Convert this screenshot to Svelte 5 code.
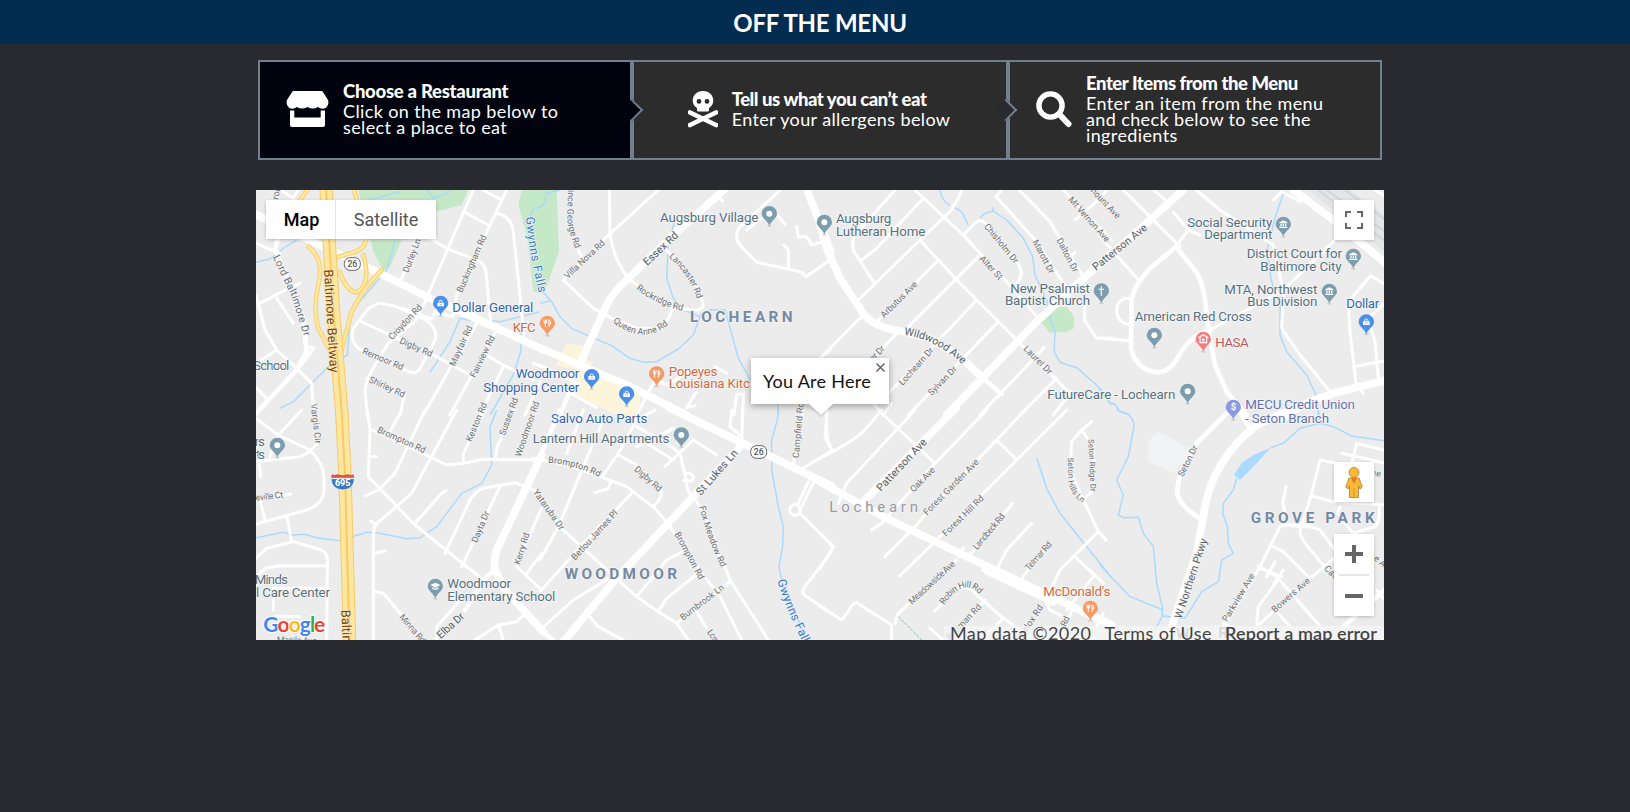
<script>
  // Map geometry is stored per tile; each tile uses units of a third of a pixel.
  const tiles = [
    {
      x: -6, y: -5,
      parks: ['M325 15H655L635 60L555 80L520 160L455 165L420 245L400 258L370 200Z', 'M815 15H875V325L850 320L840 230L830 150L805 60Z'],
      water: ['M18 232L60 222L100 190L140 165', 'M350 48L450 20', 'M440 150L410 255L320 360L300 400L292 510L230 550L130 650L90 670', 'M540 562L600 470L630 400L655 405L700 405L750 410L870 380', 'M530 15L550 38L585 28L600 15', 'M815 420L812 500L790 570L720 690', 'M875 65L848 75L838 100'],
      thin: ['M18 175L65 195L90 205', 'M70 0L130 40L145 10', 'M30 355L105 315L150 295', 'M18 330L45 435L80 495L140 550L185 595L192 690', 'M80 340L130 415', 'M18 608L50 640', 'M80 495L18 535', 'M165 485L192 490L150 545', 'M670 15L525 350L495 410L415 475L375 540Q345 590 345 620L352 690', 'M770 15L620 330L610 395L560 385', 'M640 80L715 120', 'M690 10L755 45', 'M740 85Q782 92 790 140L822 450', 'M480 125L590 190L690 230Q708 240 710 280L722 410', 'M505 150L455 280', 'M310 430L355 370L385 355L430 362L530 405Q565 435 555 465L510 550Q500 568 475 560L325 490Q298 465 310 430', 'M330 408L420 450L560 515L660 570', 'M350 580L462 635L450 690', 'M460 370L545 402L570 355', 'M690 400L600 550L520 690', 'M740 435L600 690', 'M700 505L760 540L850 585', 'M760 545L690 690', 'M850 535L875 545', 'M870 590L825 690'],
      mid: ['M92 120L75 195L100 250L160 400L170 500L140 555L18 685'],
      main: ['M10 85L250 200L400 270L540 340L700 410L880 495'],
      ramps: ['M175 10L150 45', 'M310 10L325 60L350 150Q350 195 300 205L265 215', 'M175 185Q225 225 205 300Q188 370 205 430L258 530', 'M268 260Q290 320 320 322Q365 300 340 210', 'M395 255Q340 310 305 380L268 520'],
      highway: 'M228 10L237 160L252 400L276 690',
      labels: [['Durley Ln', 475, 265, 513, 165], ['Buckingham Rd', 636, 325, 710, 155], ['Croydon Rd', 427, 466, 518, 368], ['Digby Rd', 447, 474, 543, 516], ['Remoor Rd', 335, 505, 456, 556], ['Shirley Rd', 355, 590, 460, 638], ['Mayfair Rd', 614, 545, 668, 427], ['Fairview Rd', 675, 580, 736, 457], ['ror', 83, 45, 92, 12],
        ['Baltimore Beltway', 222, 254, 240, 563, 'brown'], ['Dollar General', 607, 380, 850, 380, 'poi blue'], ['KFC', 788, 440, 857, 440, 'poi orange'], ['School', 10, 555, 118, 555, 'poi'], ['Woodmoor', 797, 580, 988, 580, 'poi blue'], ['Shopping Center', 700, 620, 988, 620, 'poi blue']],
      curved: [['Lord Baltimore Dr', 'M68 216L125 335L168 475', 'big', 257], ['Gwynns Falls', 'M828 96Q834 190 872 348', 'river', 232]],
      pins: [[572, 355, '#4a90e8', 'shop']], shields: [[307, 237]]
    },
    {
      x: 284, y: -5,
      parks: ['M0 15H50L57 200L22 300L0 322Z'],
      sand: ['M65 505L82 475L135 482L132 520L158 530L150 548L100 552L45 542Z', 'M95 560L155 550L300 620L300 690H230L85 620Z'],
      water: ['M60 15L18 25L15 55L0 68', 'M0 310L35 350L60 395L95 430L150 455L215 482L270 520L310 532L350 530L415 492L460 450L480 395L430 375L400 340L380 280L385 180L402 115', 'M480 390L510 375L555 375L565 410L595 520L640 600', 'M0 355L30 348', 'M712 650L716 690'],
      thin: ['M208 10L210 150Q220 220 265 280', 'M265 280L330 330L400 370L470 376Q495 372 488 350L475 310L380 195', 'M355 15L195 160L70 285L160 370L210 398L290 430L370 430L400 370', 'M115 195L125 215', 'M530 30L548 48', 'M725 12L600 125Q580 150 600 180L650 232L745 252L785 262L798 275L870 225', 'M732 180L745 195V250', 'M770 125L775 155L800 155L815 180L850 170', 'M620 135L665 100', 'M735 118L700 75', 'M80 618L170 668', 'M0 540L120 600', 'M345 585L290 690', 'M340 585L385 600L420 575L480 552', 'M470 620L440 668L465 662', 'M525 545L560 565', 'M582 690L590 628H610L608 690', 'M870 495L840 520'],
      mid: ['M115 560L60 690'],
      main: ['M555 12L400 150L265 280Q215 325 200 360L118 540', 'M800 12L872 200', 'M0 488L118 540L260 600L440 690'],
      labels: [['Villa Nova Rd', 83, 283, 196, 176], ['Essex Rd', 322, 243, 417, 153, 'dark'], ['Augsburg Village', 360, 110, 655, 110, 'poi'], ['LOCHEARN', 450, 410, 758, 410, 'area'], ['Popeyes', 386, 573, 532, 573, 'poi orange'], ['Louisiana Kitc', 386, 610, 630, 610, 'poi orange']],
      curved: [['ince George Rd', 'M84 15L82 100Q84 140 110 200', '', 180], ['Lancaster Rd', 'M386 216Q450 270 472 345', '', 154], ['Rockridge Rd', 'M288 312Q350 360 432 378', '', 155], ['Queen Anne Rd', 'M218 410Q310 485 390 415', '', 184]],
      pins: [[22, 415, '#f79b66', 'food'], [155, 575, '#4a90e8', 'shop'], [260, 627, '#4a90e8', 'shop'], [350, 567, '#f79b66', 'food'], [688, 86, '#7b9dae', 'dot'], [853, 112, '#7b9dae', 'dot']]
    },
    {
      x: 564, y: -5,
      parks: ['M690 370L740 365L762 395V430L740 440L690 443L662 410Z'],
      water: ['M360 15Q365 50 390 60', 'M405 68L425 80L445 120', 'M480 100L495 85L520 78L560 105L610 160L638 215L645 270L680 345L690 400L705 440L702 500L720 532L770 548L830 600L875 660', 'M520 80L517 66'],
      thin: ['M225 15L105 150Q92 180 102 200L160 290', 'M285 15L370 95L430 150L480 205L560 290L655 400', 'M310 40L170 190L125 225', 'M425 15L415 40L390 80L300 165L115 345', 'M300 165L410 285L590 465L750 625', 'M355 225L165 415', 'M475 215L260 430', 'M430 150L470 110Q490 100 505 125L590 230Q610 255 600 280L590 300', 'M470 345L200 630', 'M535 410L265 690', 'M125 395L0 520', 'M230 445L160 520', 'M545 15L528 35L650 170L740 310', 'M598 15L690 110L795 285', 'M730 15L875 165', 'M765 105L830 50L875 0', 'M672 488L480 690', 'M710 580L600 690', 'M755 620L700 690', 'M795 355L793 405L830 460H875', 'M750 215L765 203', 'M160 655L190 690L215 655'],
      mid: ['M490 580L545 628'],
      main: ['M0 120L20 190L60 280L120 370Q145 425 250 440L330 460L420 515L490 580', 'M870 208L780 290L650 410L380 690'],
      labels: [['Augsburg', 48, 115, 214, 115, 'poi'], ['Lutheran Home', 48, 154, 316, 154, 'poi'], ['Arbutus Ave', 192, 400, 294, 300], ['Lochearn Dr', 248, 603, 342, 497], ['Sylvan Dr', 335, 633, 412, 554], ['er Dr', 160, 530, 196, 492], ['Chisholm Dr', 491, 125, 583, 237], ['Alter St', 477, 222, 537, 286], ['Marott Dr', 637, 170, 688, 268], ['Dalton Dr', 709, 165, 760, 264], ['Mt Vernon Ave', 744, 45, 858, 173], ['mount Ave', 805, 12, 890, 103], ['Patterson Ave', 828, 258, 984, 132, 'dark'], ['New Psalmist', 571, 323, 810, 323, 'poi'], ['Baptist Church', 555, 361, 810, 361, 'poi'], ['Laurel Dr', 609, 493, 686, 570], ['FutureCare - Lochearn', 682, 643, 1066, 643, 'poi']],
      curved: [['Wildwood Ave', 'M252 450Q345 460 432 542', 'dark', 200]],
      pins: [[844, 318, '#7b9dae', 'cross']]
    },
    {
      x: 844, y: -5,
      rail: 'M625 15H750L875 105V215L840 190Z',
      water: ['M550 25L525 100L500 200L515 290L540 360L540 450L560 500L620 570L648 630L655 690', 'M0 610L30 655L45 658L60 680L90 690'],
      thin: ['M70 15L240 185', 'M155 10L205 52', 'M0 155L120 290', 'M95 340Q50 335 50 380Q55 415 90 418', 'M0 460L90 467', 'M220 82L265 135L300 150', 'M265 135L235 175', 'M285 12L360 75L520 180L535 250L550 320L545 430L600 510L690 620', 'M330 435L440 375L545 320L700 170', 'M875 310L812 272L745 350L750 440L768 595L790 625', 'M760 545L870 525', 'M870 340L805 400L825 470L835 580', 'M820 12L875 45', 'M520 45L545 20L600 50L620 35'],
      mid: ['M235 180L150 250Q95 310 95 350L93 490Q110 560 180 562Q215 555 235 515Q270 450 330 435', 'M228 185L280 250Q315 290 320 400L345 540L380 620L440 690'],
      main: ['M250 15L0 240', 'M580 15L700 105L875 250', 'M870 583L700 625L630 650L540 700'],
      labels: [['Social Security', 262, 125, 517, 125, 'poi'], ['Department', 313, 163, 517, 163, 'poi'], ['District Court for', 440, 218, 726, 218, 'poi'], ['Baltimore City', 481, 257, 725, 257, 'poi'], ['MTA, Northwest', 373, 326, 652, 326, 'poi'], ['Bus Division', 442, 364, 652, 364, 'poi'], ['Dollar', 739, 370, 838, 370, 'poi blue'], ['American Red Cross', 104, 409, 456, 409, 'poi'], ['HASA', 346, 487, 446, 487, 'poi red'], ['MECU Credit Union', 436, 673, 765, 673, 'poi purple']],
      curved: [],
      pins: [[550, 118, '#7b9dae', 'gov'], [760, 214, '#7b9dae', 'gov'], [688, 319, '#7b9dae', 'gov'], [799, 411, '#4a90e8', 'shop'], [163, 451, '#7b9dae', 'dot'], [310, 463, '#f47c81', 'plus'], [263, 619, '#7b9dae', 'dot'], [400, 667, '#8c9ae0', 'dollar']]
    },
    {
      x: -6, y: 220,
      water: ['M18 383L100 367L130 375L165 373L200 383L270 392L350 367L390 370L470 386L510 383L560 350L635 250L695 220L725 165L720 50L740 0'],
      thin: ['M18 25L85 75L180 120Q220 160 222 200L222 245Q215 285 170 300L110 317L18 342', 'M155 0L85 75', 'M18 155L150 140Q180 130 205 95', 'M28 160L32 200', 'M85 75L60 140', 'M30 270L45 330', 'M80 262L122 252', 'M110 317L125 395', 'M18 445L50 415L130 395L215 420Q235 430 232 460L230 690', 'M18 500L45 475L90 467H230', 'M70 540V600', 'M150 620L75 618', 'M70 535H230', 'M352 0L360 60L355 200L495 345L700 510', 'M360 57L455 100L590 165L640 160L700 148L870 150', 'M360 140H380', 'M455 0L420 65', 'M525 0L435 190L385 240L345 258', 'M620 0L485 250L375 345Q370 360 370 400V690', 'M375 430L405 423', 'M362 333L380 345', 'M588 242L575 250L495 340', 'M375 545L400 550L450 610L520 690', 'M585 430L660 270Q680 240 700 235L795 218L870 248', 'M750 230L635 470', 'M800 470L875 540', 'M875 295L800 460', 'M875 430L830 490', 'M675 690L745 645L800 635L830 605', 'M745 645L760 690', 'M640 155V130L705 0', 'M735 145L742 110L790 0', 'M640 560L560 650V690'],
      mid: ['M645 600L710 500L735 478'],
      main: ['M875 135L740 420Q730 450 735 480L765 540L880 665'],
      highway: 'M275 0L285 200L299 700',
      labels: [['Brompton Rd', 380, 66, 522, 130], ['Keston Rd', 664, 97, 712, -18], ['Sussex Rd', 764, 78, 805, -32], ['Woodmoor Rd', 812, 142, 868, -22], ['Vargis Cir', 182, -18, 196, 102], ['eville Ct', 18, 272, 100, 263], ['Dayta Dr', 681, 400, 719, 308], ['Kerry Rd', 809, 466, 839, 372], ['Minna Rd', 447, 622, 515, 702], ['Elba Dr', 572, 688, 645, 622, 'dark'], ['Manila Ave', 80, 698, 200, 702], ['ns', 14, 108, 45, 108, 'poi'], ['ts', 18, 147, 45, 147, 'poi'], ['Lantern Hill Apartments', 848, 98, 1258, 98, 'poi'], ['Woodmoor', 592, 535, 783, 535, 'poi'], ['Elementary School', 592, 574, 916, 574, 'poi'], ['Minds', 14, 522, 114, 522, 'poi'], ['l Care Center', 18, 562, 240, 562, 'poi'], ['Baltimore', 274, 600, 281, 765, 'brown']],
      curved: [],
      pins: [[82, 106, '#7b9dae', 'dot'], [556, 529, '#7b9dae', 'grad']]
    },
    {
      x: 284, y: 220,
      sand: ['M200 0H300L280 20L240 8Z'],
      water: ['M715 0L712 30L695 90L695 180L715 290L730 350L728 410L717 470L725 510L800 690'],
      thin: ['M-20 145L30 155L110 175L180 200L260 230L345 295L390 350L410 380L440 430L540 560L605 690', 'M235 135L290 165L365 245Q365 265 340 290', 'M190 195L235 130L290 30L345 0', 'M190 30L130 170L55 350L0 450', 'M275 250L130 400L0 545', 'M165 248L205 235L212 215', 'M-15 240L70 360L190 470L290 560L355 605L410 640L445 690', 'M410 640L480 590L570 515', 'M290 560L380 450L430 425', 'M355 605L380 565L480 485', 'M145 615L175 650L250 690', 'M215 500L100 570L0 660', 'M465 265L500 330L570 510L685 690', 'M470 605L500 655', 'M455 260Q440 240 440 215L420 130L380 100L290 50', 'M430 212Q460 220 460 200Q450 185 438 190', 'M290 110L400 55', 'M375 170L460 90L530 135', 'M320 100L400 150', 'M130 0L80 130', 'M575 0L570 50L600 75', 'M608 0L605 95', 'M870 125L780 180', 'M760 160L780 60L790 0', 'M808 210L772 285', 'M820 218L785 290', 'M785 315L875 405', 'M875 425L795 530Q780 550 800 560L875 610', 'M858 0L862 90L872 110', 'M765 284A16 16 0 1 0 765 316A16 16 0 1 0 765 284'],
      mid: ['M60 0L0 140', 'M-10 650L40 690'],
      main: ['M390 -5L600 95L875 228', 'M605 105L460 260L225 510L70 695'],
      labels: [['Salvo Auto Parts', 33, 40, 322, 40, 'poi blue'], ['Digby Rd', 281, 180, 356, 246], ['Yataruba Dr', -22, 246, 60, 362], ['Betlou James Pl', 106, 452, 235, 310], ['St Lukes Ln', 482, 258, 595, 130, 'dark'], ['Campfield Rd', 776, 145, 791, -22], ['Brompton Rd', 403, 372, 478, 510], ['Burnbrook Ln', 429, 632, 554, 536], ['WOODMOOR', 74, 508, 411, 508, 'area'], ['Los', 500, 667, 523, 698]],
      curved: [['Brompton Rd', 'M24 158Q110 165 178 202', '', 160], ['Fox Meadow Rd', 'M478 290Q500 380 542 470', '', 194], ['Gwynns Falls', 'M712 512Q738 600 800 720', 'river', 222]],
      pins: [[424, 75, '#7b9dae', 'dot']], shields: [[656, 126]]
    },
    {
      x: 564, y: 220,
      water: ['M650 143L680 235L720 310L800 410L875 503'],
      thin: ['M285 0L80 220L55 280', 'M175 0L345 160', 'M185 0L130 65Q90 100 0 145', 'M22 0L15 80L35 120', 'M500 0L345 160L185 340L155 360', 'M615 0L530 90L310 320L285 350L195 440', 'M740 0L480 260L350 390L240 497', 'M530 90L590 150', 'M578 280L450 435', 'M635 340L560 420L535 470', 'M680 410L605 505', 'M410 450L235 610L225 640', 'M0 370L40 410L0 475', 'M-5 585L65 630L85 605Q95 580 110 578L215 645V690', 'M345 603L400 545Q430 520 460 545L550 625L640 690', 'M495 570L390 690', 'M550 625L480 690', 'M430 413L415 440', 'M815 35L785 60L755 95L750 180L790 270L835 365L858 390', 'M785 60L820 110V240L790 270', 'M835 365L720 480L685 555', 'M765 440L850 520', 'M820 500L740 600', 'M330 655L370 690', 'M675 570L690 600L740 625', 'M760 590L720 690', 'M830 650L850 610'],
      mid: ['M490 480L600 530'],
      main: ['M-5 213L200 325L440 440L875 645', 'M408 -5L130 275', 'M500 482L700 575'],
      trail: 'M235 620L305 690',
      labels: [['Patterson Ave', 183, 246, 322, 98, 'dark'], ['Oak Ave', 281, 248, 347, 182], ['Forest Garden Ave', 321, 317, 478, 158], ['Forest Hill Rd', 378, 380, 493, 267], ['Landbeck Rd', 471, 421, 556, 320], ['Telmar Rd', 627, 484, 697, 404], ['Meadowside Ave', 276, 585, 407, 464], ['Redman Rd', 390, 692, 486, 592], ['Belox Rd', 610, 684, 670, 592], ['Rd', 737, 652, 750, 624], ['Lochearn', 28, 306, 294, 306, 'town'], ["McDonald's", 670, 557, 871, 557, 'poi orange']],
      curved: [['Robin Hill Rd', 'M372 585Q430 500 478 552', '', 134], ['Seton Hills Ln', 'M743 143L746 220Q752 255 794 284', 'small', 150], ['Seton Ridge Dr', 'M805 88L812 250', 'small', 157]],
      pins: [[811, 595, '#f79b66', 'food']]
    },
    {
      x: 844, y: 220,
      pale: ['M145 95L175 65L270 115L225 190L145 155Z'],
      lake: 'M512 113L460 135L425 160L402 195L420 210L460 170Z',
      water: ['M50 0L80 10Q108 30 100 60L85 140L50 210L70 255L55 315L70 323L115 322L130 370L160 410L170 520L187 590V618L165 660', 'M0 465L90 560L190 600', 'M187 618L255 625L305 545L355 515L365 450L400 430L385 400L382 350L368 310L370 280L400 240L410 205', 'M512 113L550 100L600 55L660 40L700 50L755 78L855 93', 'M655 0L660 40'],
      thin: ['M558 230L548 280L555 305', 'M700 158L660 150L635 250L600 365Q600 385 640 430L670 465L750 540', 'M635 258L700 275L852 285', 'M755 160L770 100L852 120', 'M725 130L852 158', 'M640 352L555 345L540 350L480 470L365 660', 'M555 345L620 345L660 360L720 440', 'M510 405L550 425L630 505', 'M475 468L530 500L600 580L670 660', 'M525 455L500 500', 'M550 480L520 525', 'M480 475L545 500', 'M720 430L600 530L465 655', 'M720 290L712 310L760 370L825 350Q840 340 838 290', 'M530 515L475 590L470 640', 'M530 605L575 655', 'M830 540L855 570', 'M0 370L18 390', 'M370 640L400 655'],
      mid: ['M390 0L290 100Q230 190 232 250Q240 290 300 325', 'M415 0L450 55', 'M852 540L730 650'],
      main: ['M640 -25L560 5L470 45Q340 150 315 290L290 430L210 665'],
      labels: [['- Seton Branch', 435, 38, 687, 38, 'poi purple'], ['Seton Dr', 249, 202, 294, 112], ['W Northern Pkwy', 244, 628, 322, 390, 'dark'], ['GROVE PARK', 452, 338, 824, 338, 'area'], ['Parkview Ave', 381, 637, 465, 497], ['Bowers Ave', 524, 609, 632, 515], ['Cadillac', 671, 477, 740, 545], ['e Ave', 820, 448, 868, 490], ['ve', 822, 198, 842, 200], ['W', 228, 688, 260, 688, 'area'], ['R', 355, 685, 380, 685, 'area']],
      curved: [], pins: []
    }
  ];

  const at = (t) => `translate(${t.x} ${t.y}) scale(.33333)`;
  const length = (l) => Math.hypot(l[3] - l[1], l[4] - l[2]);
  const turn = (l) => `translate(${l[1]} ${l[2]}) rotate(${(Math.atan2(l[4] - l[2], l[3] - l[1]) * 180) / Math.PI})`;
</script>

<header>OFF THE MENU</header>

<main>
  <nav class="steps">
    <div class="step active">
      <svg class="icon" width="43" height="37" viewBox="0 0 43 37"><path fill="#fff" d="M8 0H35Q36.500 0 37.300 1.400L42 9Q43.500 14 40 16.700Q36 19 32 16Q27 19 21.500 16Q16 19 11 16Q7 19 3 16.700Q-.5 14 1 9L5.700 1.400Q6.500 0 8 0ZM4 19.500H8.300V26.500H34.700V19.500H39V34Q39 36 37 36H6Q4 36 4 34Z" /></svg>
      <div class="copy"><b class="first">Choose a Restaurant</b><p>Click on the map below to<br />select a place to eat</p></div>
    </div>
    <div class="step">
      <svg class="icon" width="30" height="37" viewBox="0 0 30 37"><path fill="#fff" fill-rule="evenodd" d="M15 0C8.500 0 4.700 4.500 4.700 9.500C4.700 12.500 6.200 15 9 17V19Q9 20.500 10.500 20.500H19.500Q21 20.500 21 19V17C23.800 15 25.300 12.500 25.300 9.500C25.300 4.500 21.500 0 15 0ZM11 8A2.400 2.400 0 1 1 11 12.800A2.400 2.400 0 1 1 11 8ZM19 8A2.400 2.400 0 1 1 19 12.800A2.400 2.400 0 1 1 19 8Z" /><path d="M2 21.500L28 34M28 21.500L2 34" stroke="#fff" stroke-width="4.600" stroke-linecap="round" /></svg>
      <div class="copy"><b>Tell us what you can’t eat</b><p>Enter your allergens below</p></div>
    </div>
    <div class="step">
      <svg class="icon" width="36" height="37" viewBox="0 0 36 37"><circle cx="14.500" cy="14.500" r="11.600" fill="none" stroke="#fff" stroke-width="5.400" /><path d="M24 24L32.500 33" stroke="#fff" stroke-width="6" stroke-linecap="round" /></svg>
      <div class="copy"><b>Enter Items from the Menu</b><p>Enter an item from the menu<br />and check below to see the<br />ingredients</p></div>
    </div>
  </nav>

  <section class="map">
    <svg class="canvas" width="1128" height="450" viewBox="0 0 1128 450">
      <rect width="1128" height="450" fill="#ececec" />
      {#each tiles as t}
        <g transform={at(t)}>
          {#each t.parks ?? [] as d}<path {d} fill="#c5e8c6" />{/each}
          {#each t.sand ?? [] as d}<path {d} fill="#fdf4dc" />{/each}
          {#each t.pale ?? [] as d}<path {d} fill="#f1f3f5" />{/each}
          {#if t.rail}<path d={t.rail} fill="#e2e4e6" /><path d="M655 15L870 180M680 15L870 150M735 15L870 115" stroke="#d0d4d8" stroke-width="5" />{/if}
          {#if t.lake}<path d={t.lake} fill="#aadaff" />{/if}
          {#each t.water as d}<path {d} class="water" />{/each}
        </g>
      {/each}
      {#each tiles as t}
        <g transform={at(t)}>
          {#each t.thin as d}<path {d} class="road thin" />{/each}
          {#each t.mid as d}<path {d} class="road mid" />{/each}
          {#each t.main as d}<path {d} class="road wide" />{/each}
          {#if t.trail}<path d={t.trail} fill="none" stroke="#7fba9a" stroke-width="3" stroke-dasharray="8 5" />{/if}
          {#each t.ramps ?? [] as d}<path {d} class="road ramp-edge" /><path {d} class="road ramp" />{/each}
        </g>
      {/each}
      {#each tiles as t}
        {#if t.highway}
          <g transform={at(t)}>
            <path d={t.highway} class="road hw-edge" /><path d={t.highway} class="road hw" /><path d={t.highway} class="road hw-mid" />
          </g>
        {/if}
      {/each}
      {#each tiles as t, i}
        <g transform={at(t)}>
          {#each t.labels as l}
            <text class="label {l[5] ?? ''}" transform={turn(l)} textLength={length(l)}>{l[0]}</text>
          {/each}
          {#each t.curved as c, j}
            <path id="curve-{i}-{j}" d={c[1]} fill="none" />
            <text class="label {c[2]}" textLength={c[3]}><textPath href="#curve-{i}-{j}">{c[0]}</textPath></text>
          {/each}
          {#each t.shields ?? [] as s}
            <rect x={s[0] - 24} y={s[1] - 19} width="48" height="38" rx="17" fill="#fff" stroke="#5f6368" stroke-width="3" />
            <text x={s[0]} y={s[1] + 9} class="route">26</text>
          {/each}
          {#each t.pins as p}
            <g transform="translate({p[0]} {p[1]})">
              <ellipse cy="37" rx="7" ry="3" fill="#999" opacity=".35" />
              <path d="M0 -23A23 23 0 0 1 23 0C23 14 5 20 0 37C-5 20 -23 14 -23 0A23 23 0 0 1 0 -23Z" fill={p[2]} />
              {#if p[3] === 'dot'}<circle r="9" fill="#fff" />
              {:else if p[3] === 'shop'}<path d="M-10 -2H10V9H-10ZM-6 -3V-6Q0 -15 6 -6V-3" fill="#fff" /><path d="M-3 -3V-6Q0 -10 3 -6V-3Z" fill={p[2]} /><path d="M-4 2Q0 7 4 2" fill="none" stroke={p[2]} stroke-width="2" />
              {:else if p[3] === 'food'}<path d="M-10 -11V-4Q-10 0 -6 0V11M-6 -11V0M-2 -11V-4Q-2 0 -6 0M5 11V-11Q11 -7 10 2H5" fill="none" stroke="#fff" stroke-width="3" />
              {:else if p[3] === 'cross'}<path d="M0 -14V14M-8 -5H8" stroke="#fff" stroke-width="3.500" />
              {:else if p[3] === 'gov'}<path d="M-12 -6L0 -12L12 -6V-3H-12ZM-12 7H12V11H-12ZM-9 -2H-5V6H-9ZM-2 -2H2V6H-2ZM5 -2H9V6H5Z" fill="#fff" />
              {:else if p[3] === 'grad'}<path d="M-15 -4L0 -11L15 -4L0 4ZM-9 2L0 7L9 2V8Q0 13 -9 8Z" fill="#fff" />
              {:else if p[3] === 'plus'}<path d="M-15 -5L0 -14L15 -5M-10 -6V10H10V-6M0 -4V7M-5 1H5" fill="none" stroke="#fff" stroke-width="3.500" />
              {:else}<text y="9" class="coin">$</text>{/if}
            </g>
          {/each}
        </g>
      {/each}
      <g transform="translate(-6 220) scale(.33333)">
        <path d="M243 206H313Q312 238 278 240Q245 238 243 206Z" fill="#3b78c4" stroke="#fff" stroke-width="2" />
        <path d="M246 193Q254 197 261 193Q278 198 295 193Q302 197 310 193L313 203H243Z" fill="#d9534a" />
        <text x="278" y="228" class="interstate">695</text>
        <text class="google" x="40" y="666" textLength="186"><tspan fill="#4285f4">G</tspan><tspan fill="#ea4335">o</tspan><tspan fill="#fbbc05">o</tspan><tspan fill="#4285f4">g</tspan><tspan fill="#34a853">l</tspan><tspan fill="#ea4335">e</tspan></text>
      </g>
    </svg>

    <div class="types"><button class="on">Map</button><button>Satellite</button></div>
    <button class="tool full"><svg width="18" height="18" viewBox="0 0 18 18"><path d="M0 0H6V2H2V6H0ZM12 0H18V6H16V2H12ZM0 12H2V16H6V18H0ZM16 12H18V18H12V16H16Z" fill="#666" /></svg></button>
    <button class="tool peg"><svg width="18" height="31" viewBox="0 0 18 31"><g fill="#fbb931" stroke="#977340" stroke-width=".7"><path d="M4 11H14L17.300 20L15 22L13.500 19V30.500H4.500V19L3 22L.7 20Z" /><circle cx="9" cy="5.500" r="5" /></g><path d="M6 11H12L9 17Z" fill="#e07b2d" /><path d="M9 21V30" stroke="#c98d30" stroke-width=".8" /></svg></button>
    <div class="zoom"><button><svg width="18" height="18"><path d="M7 0H11V7H18V11H11V18H7V11H0V7H7Z" fill="#666" /></svg></button><i></i><button><svg width="18" height="18"><path d="M0 7H18V11H0Z" fill="#666" /></svg></button></div>
    <div class="bubble">You Are Here<svg class="close" width="9" height="9" viewBox="0 0 9 9"><path d="M.5 .5L8.500 8.500M8.500 .5L.5 8.500" stroke="#555" stroke-width="1.300" /></svg></div>
    <footer><span>Map data ©2020</span><span>Terms of Use</span><span class="report">Report a map error</span></footer>
  </section>
</main>

<style>
  :global(body) { background: #292a2f; font-family: Lato, sans-serif; color: #fff; }
  header { height: 44px; background: #032d50; font-size: 24px; font-weight: 700; line-height: 46px; text-align: center; text-indent: 10px; letter-spacing: -.25px; }
  main { width: 1128px; margin: 16px auto 0 256px; height: 752px; }
  .steps { display: grid; grid-template-columns: 374px 376px 374px; height: 100px; margin: 0 2px; }
  .step { position: relative; box-sizing: border-box; border: 2px solid #708090; background: #2c2c2c; display: flex; align-items: center; padding-left: 26px; }
  .step:nth-child(2) { justify-content: center; padding: 0 2px 0 0; }
  .step.active { background: #00030d; }
  .step:not(:last-child)::after { content: ''; position: absolute; z-index: 2; box-sizing: border-box; width: 16px; height: 16px; right: -8px; top: 40px; transform: rotate(-45deg); border: solid #708090; border-width: 0 2px 2px 0; background: #292a2f; }
  .step.active::after { background: #00030d; right: -10px; }
  .icon { margin-right: 14px; flex: none; position: relative; top: -1px; }
  .copy { padding-bottom: 4px; }
  .step b { display: block; font-size: 18.500px; font-weight: 900; line-height: 20px; letter-spacing: -.45px; white-space: nowrap; }
  .step b.first { letter-spacing: -.28px; }
  .step p { margin: 2px 0 0; font-size: 18px; line-height: 16px; letter-spacing: .38px; white-space: nowrap; }
  .map { position: relative; width: 1128px; height: 450px; margin-top: 30px; overflow: hidden; font-family: Roboto, sans-serif; }
  .canvas { display: block; }
  .water { fill: none; stroke: #aadaff; stroke-width: 4.500; stroke-linejoin: round; }
  .road { fill: none; stroke: #fff; stroke-linejoin: round; stroke-linecap: round; }
  .thin { stroke-width: 9; }
  .mid { stroke-width: 14; }
  .wide { stroke-width: 23; }
  .ramp-edge { stroke: #f7d070; stroke-width: 14; }
  .ramp { stroke: #fee8a0; stroke-width: 8; }
  .hw-edge { stroke: #f6cb68; stroke-width: 40; stroke-linecap: butt; }
  .hw { stroke: #fde6a0; stroke-width: 34; stroke-linecap: butt; }
  .hw-mid { stroke: #f6cb68; stroke-width: 6; stroke-linecap: butt; }
  .label { font-size: 27px; fill: #6c7176; stroke: #f3f3f3; stroke-width: 5px; paint-order: stroke; stroke-linejoin: round; white-space: pre; }
  .big { font-size: 31px; }
  .small { font-size: 24px; }
  .dark { font-size: 32px; fill: #566068; }
  .poi { font-size: 40px; fill: #56717f; stroke: #f7f7f7; }
  .blue { fill: #3568b0; }
  .orange { fill: #d06d40; }
  .red { fill: #b75761; }
  .purple { fill: #6573b3; }
  .brown { font-size: 38px; fill: #74451e; stroke: #fdebb5; }
  .river { font-size: 36px; fill: #4079c0; stroke: #e9f2f8; }
  .area { font-size: 46px; font-weight: 700; fill: #7489a4; stroke: #f5f5f5; }
  .town { font-size: 45px; fill: #959ba5; }
  .route { font-size: 26px; text-anchor: middle; fill: #555; font-weight: 500; }
  .interstate { font-size: 27px; font-weight: 800; text-anchor: middle; fill: #fff; }
  .coin { font-size: 28px; font-weight: 700; text-anchor: middle; fill: #fff; }
  .google { font-family: Lato, sans-serif; font-weight: 700; font-size: 63px; stroke: #fff; stroke-width: 6px; paint-order: stroke; }
  button { border: 0; padding: 0; background: #fff; font: inherit; display: flex; align-items: center; justify-content: center; }
  .types { position: absolute; left: 10px; top: 10px; height: 39px; display: flex; box-shadow: 0 1px 4px -1px rgba(0,0,0,.4); }
  .types button { width: 101px; font-size: 18px; color: #565656; border-left: 1px solid #e6e6e6; }
  .types .on { width: 69px; padding-left: 2px; font-weight: 500; color: #000; border: 0; }
  .tool, .zoom { position: absolute; right: 10px; width: 40px; height: 40px; background: #fff; box-shadow: 0 1px 4px -1px rgba(0,0,0,.35); }
  .full { top: 10px; }
  .peg { top: 272px; }
  .zoom { top: 344px; height: 82px; }
  .zoom button { width: 40px; height: 40px; }
  .zoom i { display: block; width: 30px; height: 2px; margin: 0 5px; background: #e6e6e6; }
  .bubble { position: absolute; left: 495px; top: 168px; width: 138px; height: 46px; box-sizing: border-box; padding-left: 12px; background: #fff; color: #111; font: 18px/47px Lato, sans-serif; letter-spacing: .28px; box-shadow: 0 2px 7px rgba(0,0,0,.35); white-space: nowrap; }
  .bubble::after { content: ''; position: absolute; left: 58px; top: 46px; border: solid transparent; border-width: 11px 12px 0; border-top-color: #fff; filter: drop-shadow(0 2px 1px rgba(0,0,0,.15)); }
  .close { position: absolute; right: 4px; top: 5px; }
  footer { position: absolute; right: 0; bottom: 0; width: 440px; height: 14px; box-sizing: border-box; padding: 0 7px 0 6px; display: flex; justify-content: space-between; background: rgba(245,245,245,.75); color: #444; font: 18px/14px Lato, sans-serif; white-space: nowrap; letter-spacing: .4px; }
  .report { font-weight: 600; letter-spacing: .1px; }
</style>
